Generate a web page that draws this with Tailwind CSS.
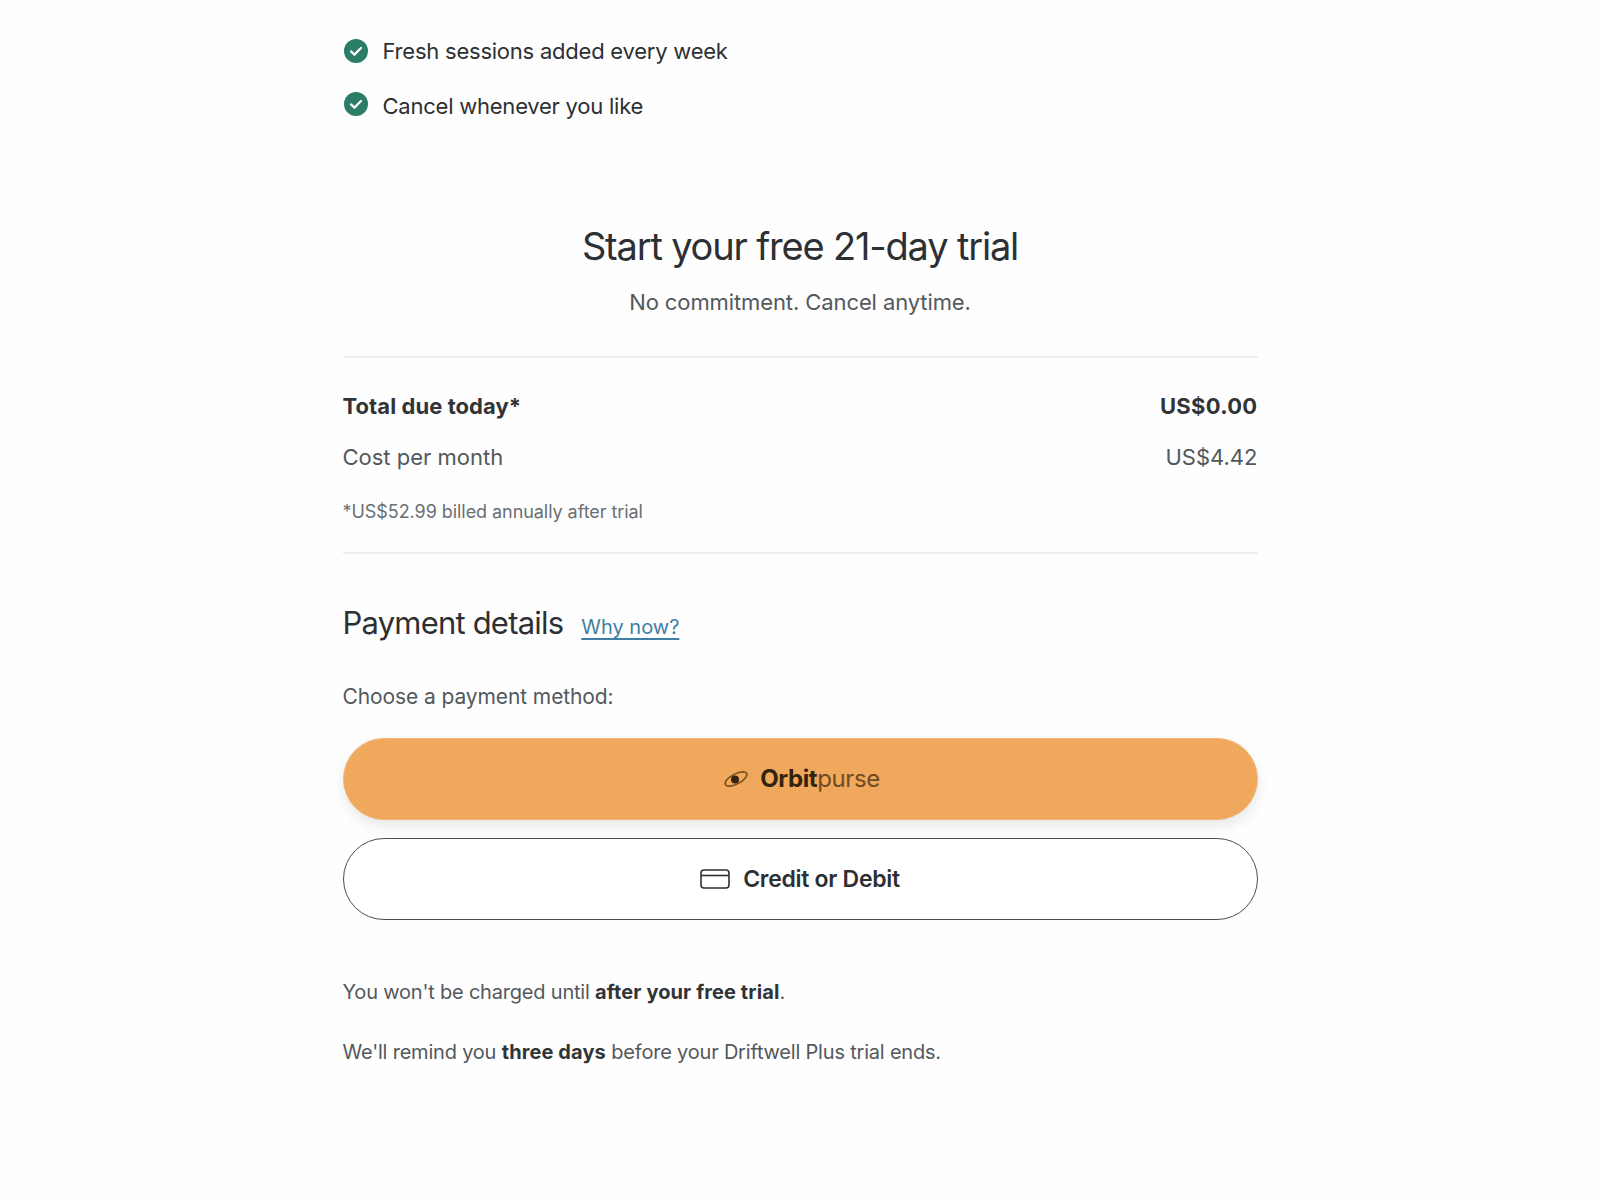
<!DOCTYPE html>
<html lang="en">
<head>
  <meta charset="UTF-8" />
  <meta name="viewport" content="width=device-width, initial-scale=1.0" />
  <title>Start your free trial</title>
  <script src="https://cdn.jsdelivr.net/npm/@tailwindcss/browser@4"></script>
</head>
<body class="bg-[#fefefe] text-[#2d3033] font-['Inter',sans-serif] h-[1200px] overflow-hidden">
  <main class="w-[915px] mx-auto">

    <!-- Feature list -->
    <ul class="pt-[37px] flex flex-col gap-[27px] text-[22px] leading-[28px] tracking-[-0.23px] text-[#2d3033]">
      <li class="flex items-center gap-[15px]">
        <svg class="w-6 h-6 ml-px shrink-0 -mt-[1px]" viewBox="0 0 24 24"><circle cx="12" cy="12" r="12" fill="#2c7d68"/><path d="M7 12.4l3.4 3.2L17 9" fill="none" stroke="#fff" stroke-width="2.2" stroke-linecap="round" stroke-linejoin="round"/></svg>
        <span>Fresh sessions added every week</span>
      </li>
      <li class="flex items-center gap-[15px]">
        <svg class="w-6 h-6 ml-px shrink-0 -mt-[4px]" viewBox="0 0 24 24"><circle cx="12" cy="12" r="12" fill="#2c7d68"/><path d="M7 12.4l3.4 3.2L17 9" fill="none" stroke="#fff" stroke-width="2.2" stroke-linecap="round" stroke-linejoin="round"/></svg>
        <span>Cancel whenever you like</span>
      </li>
    </ul>

    <!-- Heading -->
    <div class="text-center mt-[102px]">
      <h1 class="text-[38px] leading-[48px] tracking-[-1.18px]">Start your free 21-day trial</h1>
      <p class="mt-[18px] text-[22px] leading-[28px] tracking-[-0.1px] text-[#53585c]">No commitment. Cancel anytime.</p>
    </div>

    <!-- Price summary -->
    <section class="mt-[40px] border-y-2 border-[#eeeeef] pt-[34px] pb-[28px] text-[22px] leading-[28px]">
      <div class="flex justify-between font-bold text-[#313437]"><span class="tracking-[0.07px]">Total due today*</span><span class="tracking-[0.3px]">US$0.00</span></div>
      <div class="flex justify-between mt-[23px] text-[#53585c]"><span>Cost per month</span><span>US$4.42</span></div>
      <p class="mt-[29px] text-[18px] leading-[24px] tracking-[-0.06px] text-[#6a6f73]">*US$52.99 billed annually after trial</p>
    </section>

    <!-- Payment -->
    <div class="mt-[49px] flex items-baseline gap-[18px]">
      <h2 class="text-[31px] leading-[40px] tracking-[-0.8px]">Payment details</h2>
      <a href="#" class="text-[20px] leading-[28px] text-[#3f7fa6] underline underline-offset-4">Why now?</a>
    </div>
    <p class="mt-[40px] text-[21px] leading-[28px] tracking-[-0.1px] text-[#53585c]">Choose a payment method:</p>

    <button class="mt-[27px] w-full h-[82px] rounded-full bg-[#f0a85c] border border-[#efb477] shadow-[0_6px_14px_rgba(0,0,0,0.09)] flex items-center justify-center gap-[11px] text-[24px] tracking-[-0.4px]">
      <svg class="w-[26px] h-[20px] ml-[3px]" viewBox="0 0 26 20" fill="none"><ellipse cx="13" cy="10" rx="12" ry="5" transform="rotate(-28 13 10)" stroke="#7a5022" stroke-width="1.6"/><circle cx="12" cy="10.5" r="4" fill="#33230f"/></svg>
      <span><span class="font-bold text-[#33230f]">Orbit</span><span class="text-[#6f4c24]">purse</span></span>
    </button>
    <button class="mt-[18px] w-full h-[82px] rounded-full border border-[#4a4d50] bg-white flex items-center justify-center gap-[13px] text-[23px] tracking-[-0.3px] font-semibold text-[#2d3033]">
      <svg class="w-[30px] h-[20px]" viewBox="0 0 30 20" fill="none" stroke="#2d3033" stroke-width="1.6"><rect x="1" y="1" width="28" height="18" rx="3"/><path d="M1 6.5h28"/></svg>
      <span>Credit or Debit</span>
    </button>

    <!-- Notes -->
    <p class="mt-[58px] text-[20px] leading-[28px] tracking-[-0.2px] text-[#53585c]">You won't be charged until <strong class="font-bold tracking-[0.1px] text-[#313437]">after your free trial</strong>.</p>
    <p class="mt-[32px] text-[20px] leading-[28px] tracking-[-0.2px] text-[#53585c]">We'll remind you <strong class="font-bold tracking-[0.1px] text-[#313437]">three days</strong> before your Driftwell Plus trial ends.</p>
  </main>
</body>
</html>
